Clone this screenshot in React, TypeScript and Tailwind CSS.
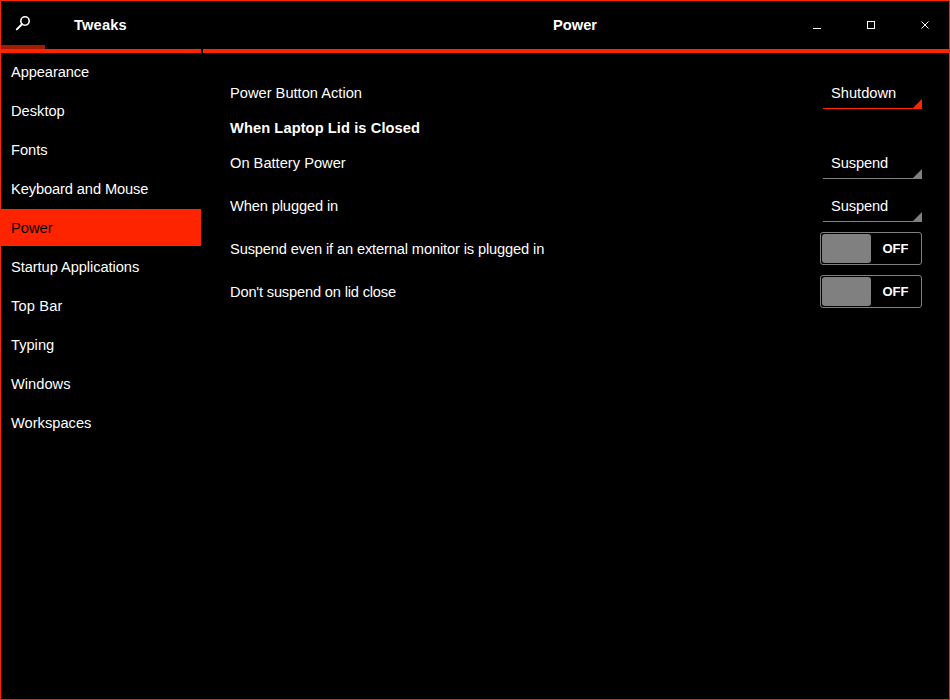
import React from "react";

const FONT = "font-['Liberation_Sans',Arial,sans-serif]";
const items: [string, string][] = [
  ["Appearance", "tracking-[-0.1px]"],
  ["Desktop", ""],
  ["Fonts", ""],
  ["Keyboard and Mouse", "tracking-[-0.11px]"],
  ["Power", ""],
  ["Startup Applications", "tracking-[-0.07px]"],
  ["Top Bar", "tracking-[0.14px]"],
  ["Typing", ""],
  ["Windows", ""],
  ["Workspaces", ""],
];

function Combo({ label, active }: { label: string; active?: boolean }) {
  return (
    <div className={`relative w-[99px] h-[33px] border-b ${active ? "border-[#ff2400]" : "border-[#808080]"} pl-[8px] pt-[1px]`}>
      <span className={`block leading-[33px] ${active ? "" : "tracking-[-0.1px]"}`}>{label}</span>
      <svg className="absolute right-0 bottom-0" width="9" height="9" viewBox="0 0 9 9">
        <path d="M9 0V9H0Z" fill={active ? "#ff2400" : "#808080"} />
      </svg>
    </div>
  );
}

function Toggle() {
  return (
    <div className="w-[102px] h-[33px] border border-[#808080] rounded-[3px] p-[1px] flex items-center">
      <div className="w-[49px] h-[29px] bg-[#808080] rounded-[3px]" />
      <span className="flex-1 text-center font-bold text-[13px] text-white">OFF</span>
    </div>
  );
}

function Row({ label, children, className }: { label: React.ReactNode; children: React.ReactNode; className: string }) {
  return (
    <div className={`flex items-center justify-between h-[33px] ${className}`}>
      <span>{label}</span>
      {children}
    </div>
  );
}

export default function App() {
  return (
    <div className={`w-[950px] h-[700px] bg-black border border-[#ff2400] text-white text-[14.67px] overflow-hidden flex flex-col ${FONT}`}>
      <header className="h-[48px] flex shrink-0">
        <div className="w-[44px] h-[48px] border-b-[4px] border-[#a31c00] flex items-center justify-center">
          <svg width="16" height="16" viewBox="0 0 16 16" fill="none" stroke="#fff" strokeWidth="1.6">
            <circle cx="10" cy="6" r="4.2" />
            <path d="M7 9.2L1.8 14.4" strokeLinecap="round" strokeWidth="2" />
          </svg>
        </div>
        <div className="w-[156px] pl-[29px] leading-[48px] font-bold tracking-[0.16px]">Tweaks</div>
        <div className="w-[2px]" />
        <div className="w-[586px] pl-[350px] leading-[48px] font-bold">Power</div>
        <div className="flex-1 flex items-center pl-[24px] gap-[46px]">
          <svg width="8" height="8" viewBox="0 0 8 8" shapeRendering="crispEdges"><path d="M0 7.5H8" stroke="#fff" strokeWidth="1" /></svg>
          <svg width="8" height="8" viewBox="0 0 8 8" shapeRendering="crispEdges"><rect x="0.5" y="0.5" width="7" height="7" fill="none" stroke="#fff" strokeWidth="1" /></svg>
          <svg width="8" height="8" viewBox="0 0 8 8"><path d="M0.5 0.5L7.5 7.5M7.5 0.5L0.5 7.5" stroke="#fff" strokeWidth="1" /></svg>
        </div>
      </header>
      <div className="flex shrink-0 h-[4px]">
        <div className="w-[200px] bg-[#ff2400]" />
        <div className="w-[2px]" />
        <div className="flex-1 bg-[#ff2400]" />
      </div>
      <div className="flex flex-1">
        <nav className="w-[200px] flex flex-col gap-[2px]">
          {items.map(([t, track]) => (
            <div key={t} className={`h-[37px] pl-[10px] pt-[1px] leading-[37px] ${track} ${t === "Power" ? "bg-[#ff2400] text-black" : ""}`}>
              {t}
            </div>
          ))}
        </nav>
        <main className="flex-1 pl-[29px] pr-[27px] pt-[23px] flex flex-col">
          <Row label="Power Button Action" className="">
            <Combo label="Shutdown" active />
          </Row>
          <div className="font-bold leading-[17px] mt-[11px] tracking-[0.08px]">When Laptop Lid is Closed</div>
          <Row label="On Battery Power" className="mt-[9px]">
            <Combo label="Suspend" />
          </Row>
          <Row label={<span className="tracking-[-0.13px]">When plugged in</span>} className="mt-[10px]">
            <Combo label="Suspend" />
          </Row>
          <Row label={<span className="tracking-[-0.14px]">Suspend even if an external monitor is plugged in</span>} className="mt-[10px]">
            <Toggle />
          </Row>
          <Row label={<span className="tracking-[-0.18px]">Don't suspend on lid close</span>} className="mt-[10px]">
            <Toggle />
          </Row>
        </main>
      </div>
    </div>
  );
}
